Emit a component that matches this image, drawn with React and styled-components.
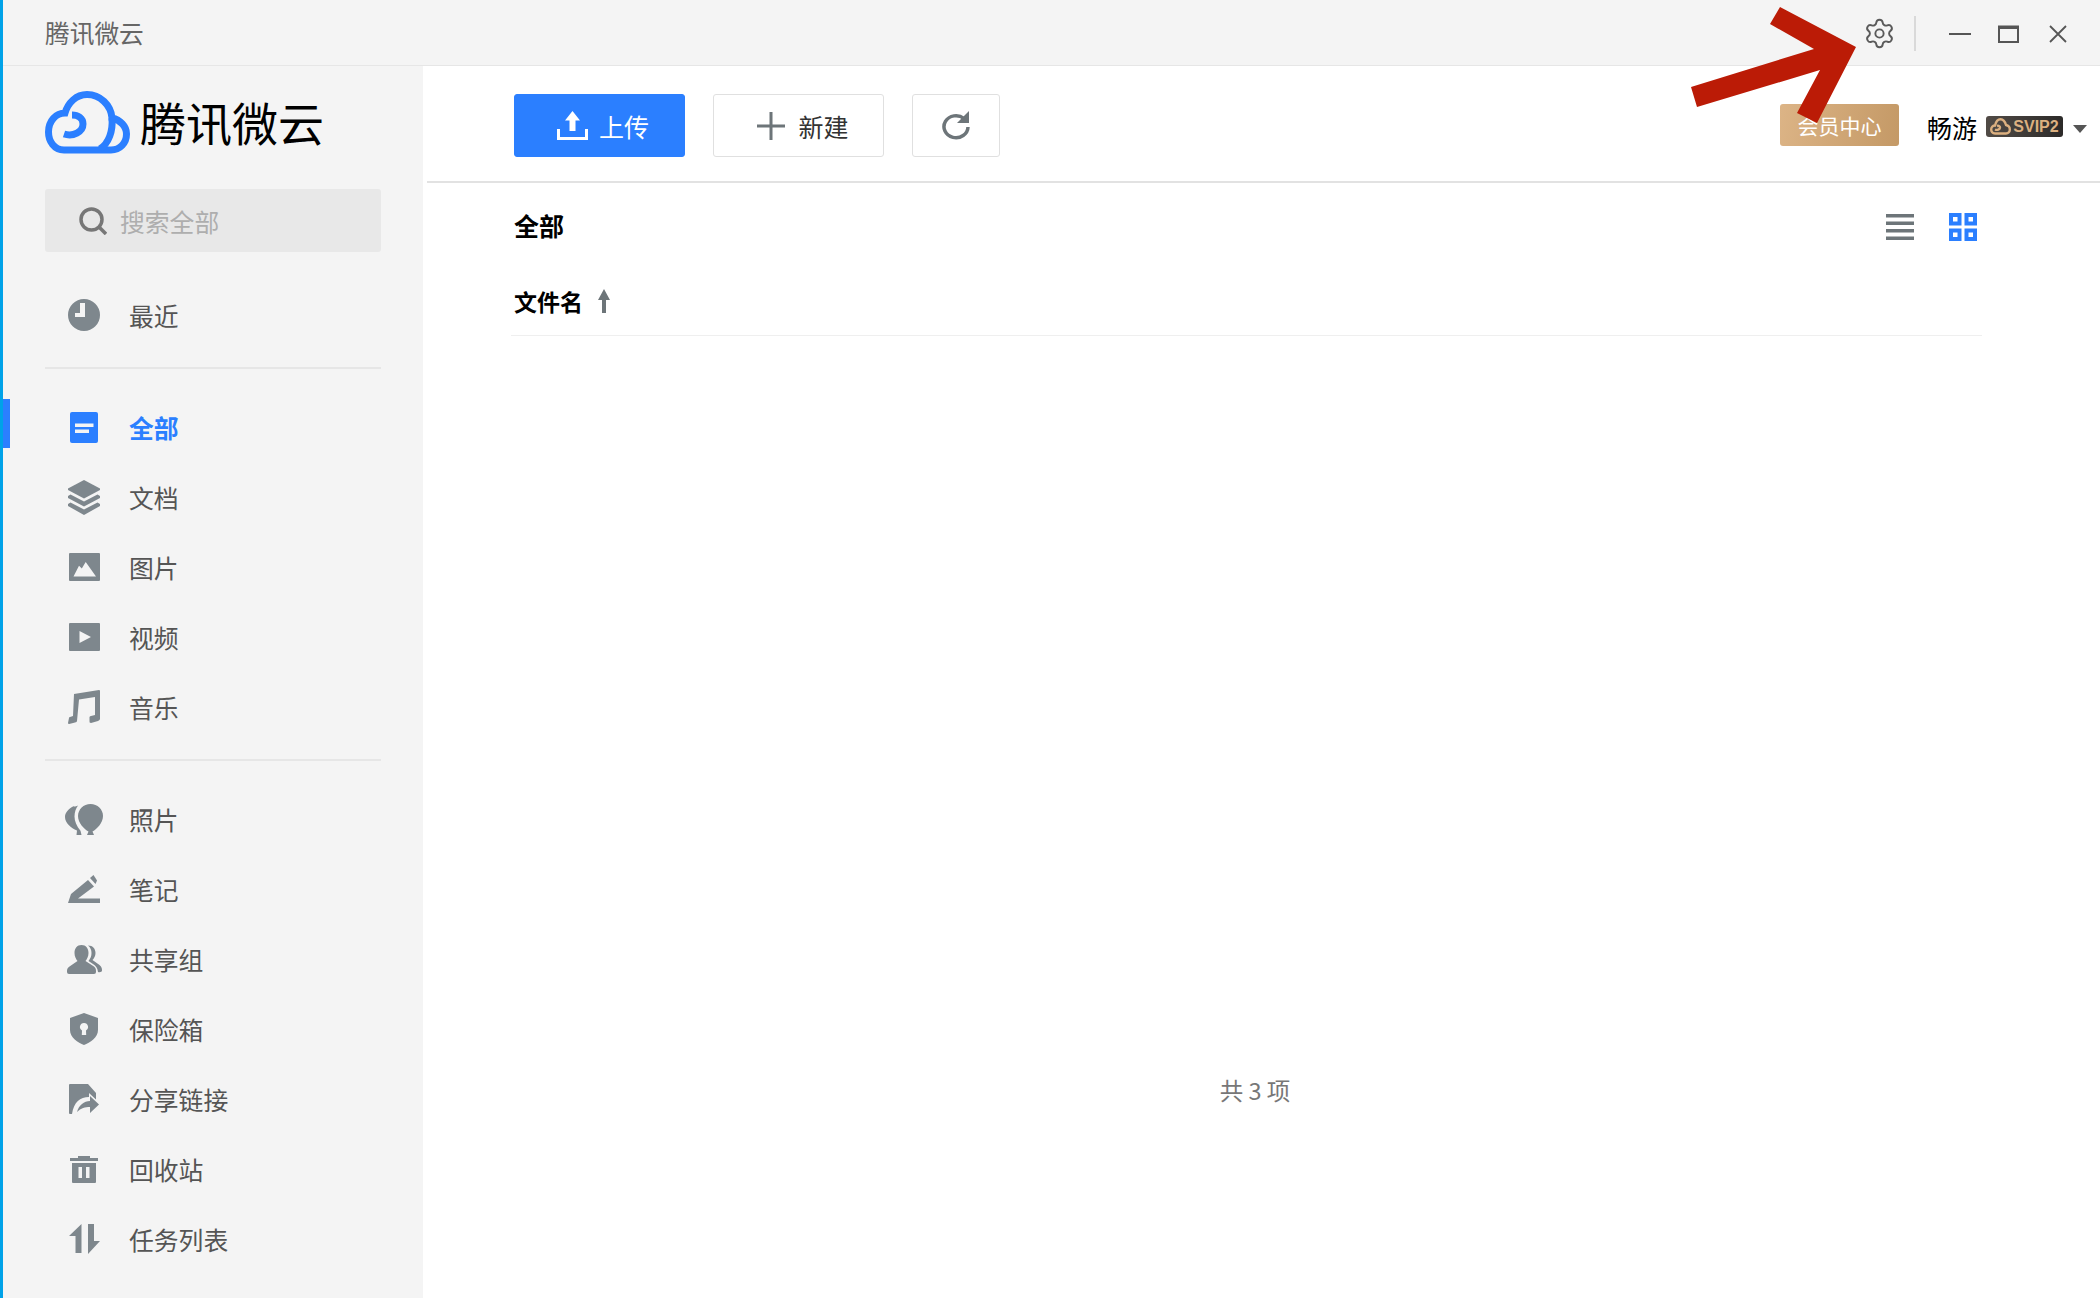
import React from 'react';
import styled, { createGlobalStyle } from 'styled-components';
import { Settings } from 'lucide-react';

const CJK = `"Noto Sans CJK SC", "Noto Sans", sans-serif`;

const GlobalStyle = createGlobalStyle`
  html, body {
    margin: 0;
    padding: 0;
    background: #fff;
    font-family: ${CJK};
  }
  * { box-sizing: border-box; }
`;

const Page = styled.div`
  position: relative;
  width: 2100px;
  height: 1298px;
  overflow: hidden;
  border-left: 3px solid #00a2e8;
  display: flex;
  flex-direction: column;
  background: #fff;
`;

const TitleBar = styled.header`
  flex: none;
  height: 66px;
  display: flex;
  align-items: center;
  padding-left: 42px;
  background: #f4f4f4;
  border-bottom: 1px solid #e6e6e6;
`;

const TitleText = styled.span`
  font-size: 24.7px;
  color: #666;
  margin-top: -2px;
`;

const WindowControls = styled.div`
  margin-left: auto;
  display: flex;
  align-items: center;
  padding: 2px 33px 0 0;
`;

const GearButton = styled.span`
  display: flex;
  margin-right: 18px;
  color: #5a5a5a;
`;

const Divider = styled.span`
  width: 2px;
  height: 35px;
  background: #d9d9d9;
  margin-right: 33px;
`;

const WinGlyph = styled.svg`
  display: block;
  margin-left: ${props => props.$gap}px;
`;

const Body = styled.div`
  flex: 1;
  display: flex;
  min-height: 0;
`;

const Sidebar = styled.aside`
  flex: none;
  width: 420px;
  background: #f4f4f4;
  padding-top: 25px;
`;

const Logo = styled.div`
  display: flex;
  align-items: center;
  gap: 10px;
  height: 63px;
  padding-left: 42px;
`;

const LogoText = styled.span`
  font-size: 46px;
  line-height: 1;
  color: #000;
  margin-top: -3px;
`;

const SearchBox = styled.div`
  display: flex;
  align-items: center;
  margin: 35px 0 0 42px;
  width: 336px;
  height: 63px;
  padding-left: 34px;
  gap: 13px;
  background: #e8e8e8;
  border-radius: 3px;
`;

const SearchHint = styled.span`
  font-size: 24.8px;
  color: #aeaeae;
`;

const NavGroup = styled.nav`
  padding: ${props => props.$pad};
`;

const Rule = styled.hr`
  margin: 0 0 0 42px;
  width: 336px;
  height: 2px;
  border: none;
  background: #e6e6e6;
`;

const NavItem = styled.a`
  position: relative;
  display: flex;
  align-items: center;
  height: 70px;
  padding-left: 59px;
  font-size: 24.8px;
  color: ${props => (props.$active ? '#2b7fff' : '#555')};
  font-weight: ${props => (props.$active ? 700 : 400)};

  ${props => props.$active && `
    &::before {
      content: '';
      position: absolute;
      left: 0;
      top: 7px;
      width: 7px;
      height: 49px;
      background: #2b7fff;
    }
  `}
`;

const IconSlot = styled.span`
  flex: none;
  width: 44px;
  height: 44px;
  margin-right: 23px;
  display: flex;
  align-items: center;
  justify-content: center;
  color: #7e878d;
`;

const Main = styled.main`
  flex: 1;
  min-width: 0;
  padding-left: 4px;
  display: flex;
  flex-direction: column;
`;

const Toolbar = styled.div`
  flex: none;
  height: 117px;
  display: flex;
  padding: 28px 0 0 87px;
  border-bottom: 2px solid #e2e2e2;
`;

const Button = styled.button`
  width: ${props => props.$width}px;
  height: 63px;
  margin-right: ${props => props.$gap || 0}px;
  display: flex;
  align-items: center;
  justify-content: center;
  gap: ${props => props.$iconGap || 0}px;
  padding: 0 0 0 ${props => props.$pad || 0}px;
  border-radius: 3px;
  border: 1px solid ${props => (props.$primary ? '#2b7fff' : '#e0e0e0')};
  background: ${props => (props.$primary ? '#2b7fff' : '#fff')};
  color: ${props => (props.$primary ? '#fff' : '#333')};
  font-family: ${CJK};
  font-size: 25px;
`;

const UserArea = styled.div`
  margin-left: auto;
  display: flex;
  align-items: flex-start;
  padding-right: 13px;
`;

const MemberButton = styled.span`
  margin-top: 10px;
  width: 119px;
  height: 42px;
  display: flex;
  align-items: center;
  justify-content: center;
  border-radius: 3px;
  background: linear-gradient(100deg, #dcb486, #c49966);
  color: #fff;
  font-size: 21px;
`;

const UserName = styled.span`
  margin: 15px 0 0 28px;
  font-size: 25px;
  line-height: 36px;
  color: #000;
`;

const VipBadge = styled.span`
  margin: 22px 0 0 9px;
  width: 77px;
  height: 21px;
  display: flex;
  align-items: center;
  justify-content: center;
  gap: 2px;
  border-radius: 3px;
  background: linear-gradient(90deg, #514b46, #2c2a29);
  color: #dcb080;
  font-family: "Liberation Sans", sans-serif;
  font-weight: 700;
  font-size: 16px;
`;

const Caret = styled.span`
  margin: 31px 0 0 10px;
  width: 0;
  height: 0;
  border-left: 7px solid transparent;
  border-right: 7px solid transparent;
  border-top: 8px solid #555;
`;

const Content = styled.section`
  flex: 1;
  padding: 0 118px 0 84px;
  display: flex;
  flex-direction: column;
`;

const CrumbRow = styled.div`
  height: 84px;
  display: flex;
  align-items: center;
  justify-content: space-between;
  padding: 0 5px 0 3px;
`;

const Crumb = styled.strong`
  font-size: 25px;
  color: #000;
  font-weight: 700;
`;

const ViewSwitch = styled.div`
  margin-top: 3px;
  display: flex;
  align-items: center;
  gap: 35px;
`;

const ColumnHead = styled.div`
  height: 69px;
  display: flex;
  align-items: center;
  gap: 15px;
  padding: 0 3px 1px;
  border-bottom: 1px solid #efefef;
  font-size: 23px;
  font-weight: 700;
  color: #000;
`;

const FileArea = styled.div`
  height: 727px;
`;

const Total = styled.div`
  padding-left: 17px;
  text-align: center;
  font-size: 23.5px;
  line-height: 54px;
  color: #777;
`;

const ArrowMark = styled.svg`
  position: absolute;
  left: 1687px;
  top: 4px;
`;

const ClockIcon = () => (
  <svg width="32" height="32" viewBox="0 0 32 32" fill="currentColor">
    <path fillRule="evenodd" d="M16 0a16 16 0 1 1 0 32a16 16 0 1 1 0-32ZM12 4v10H7v4h10V4Z" />
  </svg>
);

const AllIcon = () => (
  <svg width="28" height="31" viewBox="0 0 28 31">
    <rect width="28" height="31" rx="2" fill="#2b7fff" />
    <rect x="5" y="11.5" width="18.5" height="3.5" fill="#f4f4f4" />
    <rect x="5" y="17.5" width="14" height="3.5" fill="#f4f4f4" />
  </svg>
);

const LayersIcon = () => (
  <svg width="32" height="35" viewBox="0 0 32 35" fill="currentColor">
    <path d="M16 0L32 8.5V10L16 18.5L0 10V8.5Z" />
    <path d="M2.5 14.5L16 21.5L29.5 14.5L32 16V18L16 26.5L0 18V16Z" />
    <path d="M2.5 22.5L16 29.5L29.5 22.5L32 24V26L16 35L0 26V24Z" />
  </svg>
);

const ImageIcon = () => (
  <svg width="31" height="28" viewBox="0 0 31 28" fill="currentColor">
    <path fillRule="evenodd" d="M1 0H30a1 1 0 0 1 1 1V27a1 1 0 0 1-1 1H1a1 1 0 0 1-1-1V1a1 1 0 0 1 1-1ZM4.500 23.500H27L16.700 9L12.800 15.500L10 12.800Z" />
  </svg>
);

const VideoIcon = () => (
  <svg width="31" height="28" viewBox="0 0 31 28" fill="currentColor">
    <path fillRule="evenodd" d="M1 0H30a1 1 0 0 1 1 1V27a1 1 0 0 1-1 1H1a1 1 0 0 1-1-1V1a1 1 0 0 1 1-1ZM10.500 8V20L22 14Z" />
  </svg>
);

const MusicIcon = () => (
  <svg width="32" height="34" viewBox="0 0 32 34" fill="currentColor">
    <path d="M6 4L31 0Q32 0 32 1V29Q32 30 30 31L23 33Q21 33 21.500 31V27Q22 26 23 26L27 25V7L11 9.500L9 31Q9 32 7 32.500L1 34Q0 34 0 33L1 28Q1 27 2 27L5 26Z" />
  </svg>
);

const BalloonIcon = () => (
  <svg width="38" height="31" viewBox="0 0 38 31" fill="currentColor">
    <path d="M25.500 0C32.500 0 38 5.500 38 12C38 19 32 25 27.500 27.500L29 31H22L23.500 27.500C19 25 13 19 13 12C13 5.500 18.500 0 25.500 0Z" />
    <path d="M13 1.500C8 4 10 1 7 3C3 5.500 0 9 0 13C0 19 6 24 12 26.500L11.500 31H16.500L15.500 26.800C11.500 22 9.500 17 9.500 12.500C9.500 8 11 4 13 1.500Z" />
  </svg>
);

const PenIcon = () => (
  <svg width="32" height="28" viewBox="0 0 32 28" fill="currentColor">
    <path d="M0 28L3 19L20 5L26 11.500L10 23.500H32V28Z" />
    <path d="M22 3L25.500 0L29 5.500L27.500 9Z" />
  </svg>
);

const GroupIcon = () => (
  <svg width="35" height="29" viewBox="0 0 35 29" fill="currentColor">
    <path d="M14.500 0C19 0 21.500 3.500 21.500 8C21.500 11.500 20 14 18.500 16L27 21.500C29 23 29 25 29 27Q29 29 27 29H2Q0 29 0 27C0 25 0 23 2.500 21.500L10.500 16C9 14 7.500 11.500 7.500 8C7.500 3.500 10 0 14.500 0Z" />
    <path d="M21 .5C26 .5 28.500 4 28.500 8C28.500 11 27 13.500 25.500 15L32.500 20C35 22 35 24 35 25.500C35 27 33 27.500 31 27C30.500 23 29 21 26 19L21.500 16C23.500 13.500 24.500 11 24.500 8C24.500 5 23.500 2.500 21 .5Z" />
  </svg>
);

const ShieldIcon = () => (
  <svg width="28" height="32" viewBox="0 0 28 32" fill="currentColor">
    <path fillRule="evenodd" d="M14 0L28 5V17C28 25 20 29.500 14 32C8 29.500 0 25 0 17V5ZM14 10a4 4 0 0 0-2 7.500L11.800 22H16.200L16 17.500a4 4 0 0 0-2-7.500Z" />
  </svg>
);

const ShareIcon = () => (
  <svg width="30" height="30" viewBox="0 0 30 30" fill="currentColor">
    <path d="M0 1Q0 0 1 0H19L27 9V15.500L20 9V13C11 13 5 18 3 30H1Q0 30 0 29Z" />
    <path d="M21 12V17C15 17 10 21 8 28C12 24 16 23 21 23V29L30 20.500Z" />
  </svg>
);

const TrashIcon = () => (
  <svg width="28" height="27" viewBox="0 0 28 27" fill="currentColor">
    <path fillRule="evenodd" d="M8 0H20V2H28V5H0V2H8ZM2 7H26V26Q26 27 25 27H3Q2 27 2 26ZM8.500 11V22H12V11ZM16 11V22H19.500V11Z" />
  </svg>
);

const SortIcon = () => (
  <svg width="31" height="30" viewBox="0 0 31 30" fill="currentColor">
    <path d="M12.500 0V29H6.500V12H0Z" />
    <path d="M19 0H25V17H31L19 30Z" />
  </svg>
);

const CloudLogo = () => (
  <svg width="85" height="63" viewBox="0 0 85 63" fill="none" stroke="#2b7fff" strokeWidth="7">
    <path d="M66 59H19C9 59 3.500 50 3.500 41C3.500 30 11 22 20 22C23 12 31 3.500 42 3.500C55 3.500 66 14 67 27C75 29 81.500 35 81.500 43C81.500 52 75 59 66 59Z" />
    <path d="M67 27C68 40 64 52 55 58" />
    <path d="M19 43C28 46 38 41 38 33C38 27 33 24 27 24" />
  </svg>
);

const SearchIcon = () => (
  <svg width="28" height="28" viewBox="0 0 28 28" fill="none" stroke="#777" strokeWidth="3.500">
    <circle cx="12.500" cy="12.500" r="10.500" />
    <path d="M20 20L27 27" />
  </svg>
);

const UploadIcon = () => (
  <svg width="31" height="29" viewBox="0 0 31 29" fill="#fff">
    <path d="M15.500 0L23 9.500H18.500V20H12.500V9.500H8Z" />
    <path d="M0 18H3V26H28V18H31V29H0Z" />
  </svg>
);

const PlusIcon = () => (
  <svg width="28" height="28" viewBox="0 0 28 28" fill="#6d7579">
    <rect x="12.500" width="3" height="28" />
    <rect y="12.500" width="28" height="3" />
  </svg>
);

const RefreshIcon = () => (
  <svg width="28" height="29" viewBox="0 0 28 29" fill="none">
    <path d="M22 7.500A12 11 0 1 0 26 16" stroke="#6d7579" strokeWidth="3.500" />
    <path d="M27 0V12H15Z" fill="#6d7579" />
  </svg>
);

const ListViewIcon = () => (
  <svg width="28" height="26" viewBox="0 0 28 26" fill="#6d7579">
    <rect width="28" height="3.500" />
    <rect y="7.500" width="28" height="3.500" />
    <rect y="15" width="28" height="3.500" />
    <rect y="22.500" width="28" height="3.500" />
  </svg>
);

const GridViewIcon = () => (
  <svg width="28" height="28" viewBox="0 0 28 28" fill="none" stroke="#2b7fff" strokeWidth="4">
    <rect x="2" y="2" width="8.500" height="8.500" />
    <rect x="17.500" y="2" width="8.500" height="8.500" />
    <rect x="2" y="17.500" width="8.500" height="8.500" />
    <rect x="17.500" y="17.500" width="8.500" height="8.500" />
  </svg>
);

const SortArrow = () => (
  <svg width="12" height="24" viewBox="0 0 12 24" fill="#6d7579">
    <path d="M6 0L12 11H8V24H4V11H0Z" />
  </svg>
);

const BadgeCloud = () => (
  <svg width="21" height="17" viewBox="0 0 21 17" fill="none" stroke="#dcb080" strokeWidth="2.400">
    <path d="M5 15.500C2.500 15.500 1.200 13.500 1.200 11.500C1.200 9 3 7.500 5 7.500C6 3.500 8 1.200 10.500 1.200C13 1.200 15 3.500 16 7C18.500 7.500 19.800 9.500 19.800 11.500C19.800 14 18 15.500 16 15.500Z" />
    <path d="M5 11.500C7 12.500 10 11.500 10 9.500C10 8 8.500 7.500 7 8" />
  </svg>
);

const primaryNav = [
  { label: '全部', icon: AllIcon, active: true },
  { label: '文档', icon: LayersIcon },
  { label: '图片', icon: ImageIcon },
  { label: '视频', icon: VideoIcon },
  { label: '音乐', icon: MusicIcon },
];

const toolNav = [
  { label: '照片', icon: BalloonIcon },
  { label: '笔记', icon: PenIcon },
  { label: '共享组', icon: GroupIcon },
  { label: '保险箱', icon: ShieldIcon },
  { label: '分享链接', icon: ShareIcon },
  { label: '回收站', icon: TrashIcon },
  { label: '任务列表', icon: SortIcon },
];

function NavList({ items }) {
  return items.map(({ label, icon: Icon, active }) => (
    <NavItem key={label} $active={active}>
      <IconSlot><Icon /></IconSlot>
      {label}
    </NavItem>
  ));
}

export default function App() {
  return (
    <Page>
      <GlobalStyle />
      <TitleBar>
        <TitleText>腾讯微云</TitleText>
        <WindowControls>
          <GearButton><Settings size={33} strokeWidth={1.4} /></GearButton>
          <Divider />
          <WinGlyph width="22" height="2" viewBox="0 0 22 2"><rect width="22" height="2" fill="#555" /></WinGlyph>
          <WinGlyph $gap={27} width="21" height="18" viewBox="0 0 21 18" fill="none" stroke="#555">
            <rect x="1" y="1.500" width="19" height="15.500" strokeWidth="2" />
            <path d="M1 2.500H20" strokeWidth="3" />
          </WinGlyph>
          <WinGlyph $gap={30} width="18" height="18" viewBox="0 0 18 18" stroke="#555" strokeWidth="1.800">
            <path d="M1 1L17 17M17 1L1 17" />
          </WinGlyph>
        </WindowControls>
      </TitleBar>
      <Body>
        <Sidebar>
          <Logo>
            <CloudLogo />
            <LogoText>腾讯微云</LogoText>
          </Logo>
          <SearchBox>
            <SearchIcon />
            <SearchHint>搜索全部</SearchHint>
          </SearchBox>
          <NavGroup $pad="28px 0 17px">
            <NavItem>
              <IconSlot><ClockIcon /></IconSlot>
              最近
            </NavItem>
          </NavGroup>
          <Rule />
          <NavGroup $pad="23px 0 17px">
            <NavList items={primaryNav} />
          </NavGroup>
          <Rule />
          <NavGroup $pad="23px 0 0">
            <NavList items={toolNav} />
          </NavGroup>
        </Sidebar>
        <Main>
          <Toolbar>
            <Button $primary $width={171} $gap={28} $iconGap={11} $pad={7}>
              <UploadIcon />
              上传
            </Button>
            <Button $width={171} $gap={28} $iconGap={13} $pad={9}>
              <PlusIcon />
              新建
            </Button>
            <Button $width={88}>
              <RefreshIcon />
            </Button>
            <UserArea>
              <MemberButton>会员中心</MemberButton>
              <UserName>畅游</UserName>
              <VipBadge><BadgeCloud />SVIP2</VipBadge>
              <Caret />
            </UserArea>
          </Toolbar>
          <Content>
            <CrumbRow>
              <Crumb>全部</Crumb>
              <ViewSwitch>
                <ListViewIcon />
                <GridViewIcon />
              </ViewSwitch>
            </CrumbRow>
            <ColumnHead>
              文件名
              <SortArrow />
            </ColumnHead>
            <FileArea />
            <Total>共 3 项</Total>
          </Content>
        </Main>
      </Body>
      <ArrowMark width="170" height="125" viewBox="0 0 170 125">
        <path d="M90 3L80 20L124 45L1 83L7 103L130 66L107 109L127 119L166 43Z" fill="#bb1b06" />
      </ArrowMark>
    </Page>
  );
}
